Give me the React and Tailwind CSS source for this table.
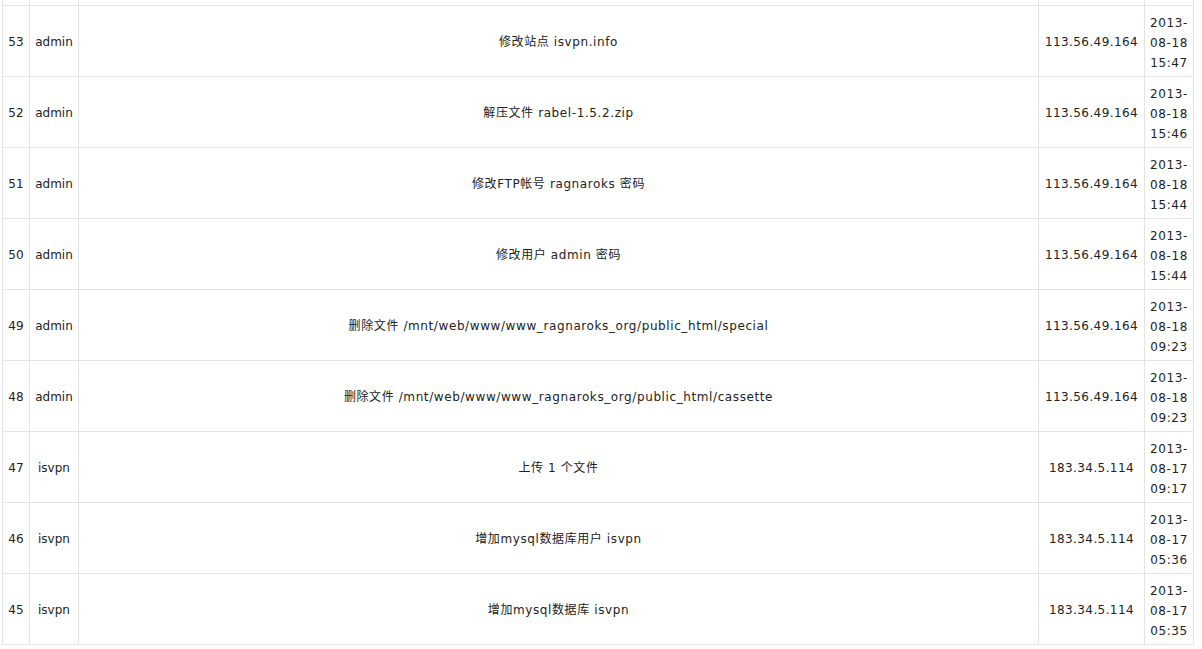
const rows = [
  { id: 53, user: "admin", action: "修改站点 isvpn.info", ip: "113.56.49.164", date: ["2013-", "08-18", "15:47"] },
  { id: 52, user: "admin", action: "解压文件 rabel-1.5.2.zip", ip: "113.56.49.164", date: ["2013-", "08-18", "15:46"] },
  { id: 51, user: "admin", action: "修改FTP帐号 ragnaroks 密码", ip: "113.56.49.164", date: ["2013-", "08-18", "15:44"] },
  { id: 50, user: "admin", action: "修改用户 admin 密码", ip: "113.56.49.164", date: ["2013-", "08-18", "15:44"] },
  { id: 49, user: "admin", action: "删除文件 /mnt/web/www/www_ragnaroks_org/public_html/special", ip: "113.56.49.164", date: ["2013-", "08-18", "09:23"] },
  { id: 48, user: "admin", action: "删除文件 /mnt/web/www/www_ragnaroks_org/public_html/cassette", ip: "113.56.49.164", date: ["2013-", "08-18", "09:23"] },
  { id: 47, user: "isvpn", action: "上传 1 个文件", ip: "183.34.5.114", date: ["2013-", "08-17", "09:17"] },
  { id: 46, user: "isvpn", action: "增加mysql数据库用户 isvpn", ip: "183.34.5.114", date: ["2013-", "08-17", "05:36"] },
  { id: 45, user: "isvpn", action: "增加mysql数据库 isvpn", ip: "183.34.5.114", date: ["2013-", "08-17", "05:35"] },
];

export default function App() {
  const td = "border border-[#e4e4e4] text-center align-middle px-0 pt-[3px] pb-0";

  return (
    <div
      className="bg-white h-[649px] overflow-hidden pl-[2px] text-[12px] leading-[20px] text-[#222]"
      style={{ fontFamily: '"DejaVu Sans", "Noto Sans CJK SC", sans-serif' }}
    >
      <table className="border-collapse table-fixed w-[1191px]">
        <colgroup>
          <col className="w-[27px]" />
          <col className="w-[49px]" />
          <col className="w-[960px]" />
          <col className="w-[106px]" />
          <col className="w-[49px]" />
        </colgroup>
        <tbody>
          {/* tail of the previous row */}
          <tr className="h-[5px]">
            <td className="border-x border-b border-[#e4e4e4]"></td>
            <td className="border-x border-b border-[#e4e4e4]"></td>
            <td className="border-x border-b border-[#e4e4e4]"></td>
            <td className="border-x border-b border-[#e4e4e4]"></td>
            <td className="border-x border-b border-[#e4e4e4]"></td>
          </tr>
          {rows.map((r) => (
            <tr key={r.id} className="h-[71px]">
              <td className={td}>{r.id}</td>
              <td className={td}>{r.user}</td>
              <td className={`${td} tracking-[0.6px]`}>{r.action}</td>
              <td className={`${td} tracking-[0.4px]`}>{r.ip}</td>
              <td className="border border-[#e4e4e4] text-center align-middle px-0 pt-[7px] pb-[3px] tracking-[0.6px]">
                {r.date.map((d, i) => (
                  <div key={i}>{d}</div>
                ))}
              </td>
            </tr>
          ))}
        </tbody>
      </table>
    </div>
  );
}
